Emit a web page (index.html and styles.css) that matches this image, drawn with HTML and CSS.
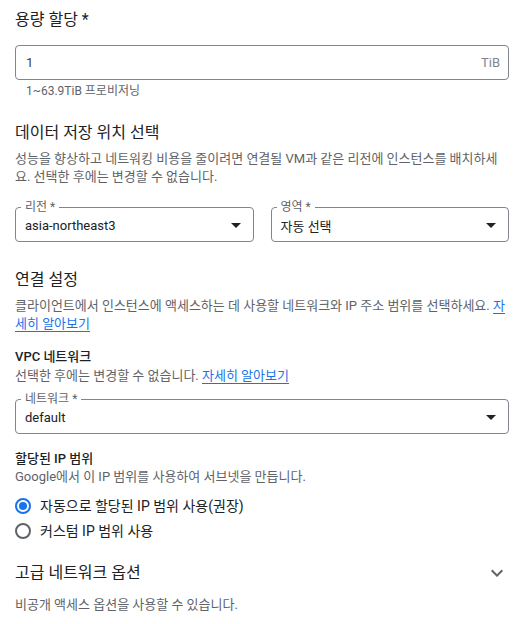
FILE: index.html
```html
<!DOCTYPE html>
<html lang="ko">
<head>
<meta charset="utf-8">
<link rel="stylesheet" href="styles.css">
</head>
<body>
<div class="page">
  <h2 class="title first">용량 할당 *</h2>
  <div class="field text">
    <span class="value">1</span>
    <span class="suffix">TiB</span>
  </div>
  <div class="helper">1~63.9TiB 프로비저닝</div>

  <h2 class="title sec">데이터 저장 위치 선택</h2>
  <p class="desc">성능을 향상하고 네트워킹 비용을 줄이려면 연결될 VM과 같은 리전에 인스턴스를 배치하세요. 선택한 후에는 변경할 수 없습니다.</p>
  <div class="row">
    <div class="field select">
      <span class="float-label">리전 *</span>
      <span class="value">asia-northeast3</span>
      <svg class="arrow" viewBox="0 0 10 5" width="10" height="5"><path d="M0 0h10L5 5z"/></svg>
    </div>
    <div class="field select">
      <span class="float-label">영역 *</span>
      <span class="value">자동 선택</span>
      <svg class="arrow" viewBox="0 0 10 5" width="10" height="5"><path d="M0 0h10L5 5z"/></svg>
    </div>
  </div>

  <h2 class="title sec2">연결 설정</h2>
  <p class="desc">클라이언트에서 인스턴스에 액세스하는 데 사용할 네트워크와 IP 주소 범위를 선택하세요. <a class="link" href="#">자세히 알아보기</a></p>

  <h3 class="subtitle vpc">VPC 네트워크</h3>
  <p class="desc tight">선택한 후에는 변경할 수 없습니다. <a class="link" href="#">자세히 알아보기</a></p>
  <div class="field select wide">
    <span class="float-label">네트워크 *</span>
    <span class="value">default</span>
    <svg class="arrow" viewBox="0 0 10 5" width="10" height="5"><path d="M0 0h10L5 5z"/></svg>
  </div>

  <h3 class="subtitle ip">할당된 IP 범위</h3>
  <p class="desc flush">Google에서 이 IP 범위를 사용하여 서브넷을 만듭니다.</p>
  <div class="radios">
    <label class="radio checked"><span class="dot"></span>자동으로 할당된 IP 범위 사용(권장)</label>
    <label class="radio"><span class="dot"></span>커스텀 IP 범위 사용</label>
  </div>

  <div class="expander">
    <h2 class="title">고급 네트워크 옵션</h2>
    <svg class="chev" viewBox="0 0 24 24" width="24" height="24"><path d="M7.41 8.59 12 13.17l4.59-4.58L18 10l-6 6-6-6z"/></svg>
  </div>
  <p class="desc last">비공개 액세스 옵션을 사용할 수 있습니다.</p>
</div>
</body>
</html>
```

FILE: styles.css
```css
* { box-sizing: border-box; }
html, body { margin: 0; padding: 0; background: #fff; }
body {
  font-family: Roboto, "Noto Sans CJK KR", sans-serif;
  color: #202124;
}
.page {
  padding: 0 13px 0 15px;
  width: 522px;
}
.title {
  margin: 0;
  font-size: 16px;
  font-weight: 400;
  line-height: 20px;
  color: #202124;
}
.title.first { margin-top: 10px; }
.title.sec { margin-top: 24px; }
.title.sec2 { margin-top: 28px; }
.field {
  position: relative;
  display: flex;
  align-items: center;
  height: 35px;
  border: 1px solid #80868b;
  border-radius: 4px;
  padding: 0 8px 0 9px;
  font-size: 13px;
}
.field.text { margin-top: 15px; }
.field .value { flex: 1; color: #202124; }
.field.text .value { color: #3c4043; padding-left: 1px; }
.suffix { color: #80868b; font-size: 13px; }
.helper {
  margin-top: 3px;
  padding-left: 11px;
  font-size: 12px;
  line-height: 16px;
  color: #5f6368;
}
.desc {
  margin: 7px 0 0;
  font-size: 13px;
  line-height: 18px;
  color: #5f6368;
}
.desc.tight { margin-top: 1px; }
.desc.flush { margin-top: 0; }
.desc.last { margin-top: 11px; }
.link {
  color: #1a73e8;
  text-decoration: none;
  border-bottom: 1px solid #1a73e8;
}
.row {
  display: flex;
  gap: 17px;
  margin-top: 21px;
}
.row .select { flex: 1; }
.select { padding: 2px 12px 0 9px; }
.float-label {
  position: absolute;
  top: -8px;
  left: 5px;
  padding: 0 4px;
  background: #fff;
  font-size: 12px;
  line-height: 14px;
  color: #5f6368;
}
.arrow { fill: #202124; flex: none; }
.subtitle {
  margin: 0;
  font-size: 13px;
  font-weight: 500;
  line-height: 18px;
  color: #202124;
}
.subtitle.vpc { margin-top: 15px; }
.subtitle.ip { margin-top: 16px; }
.wide { margin-top: 14px; }
.radios {
  display: flex;
  flex-direction: column;
  gap: 7px;
  margin-top: 11px;
}
.radio {
  display: flex;
  align-items: center;
  gap: 9px;
  font-size: 14px;
  line-height: 18px;
  color: #202124;
}
.dot {
  width: 16px;
  height: 16px;
  border-radius: 50%;
  border: 2px solid #5f6368;
  flex: none;
  display: flex;
  align-items: center;
  justify-content: center;
}
.radio.checked .dot { border-color: #1a73e8; }
.radio.checked .dot::after {
  content: "";
  width: 8px;
  height: 8px;
  border-radius: 50%;
  background: #1a73e8;
}
.expander {
  display: flex;
  align-items: center;
  justify-content: space-between;
  margin-top: 21px;
}
.chev { fill: #5f6368; }
```
